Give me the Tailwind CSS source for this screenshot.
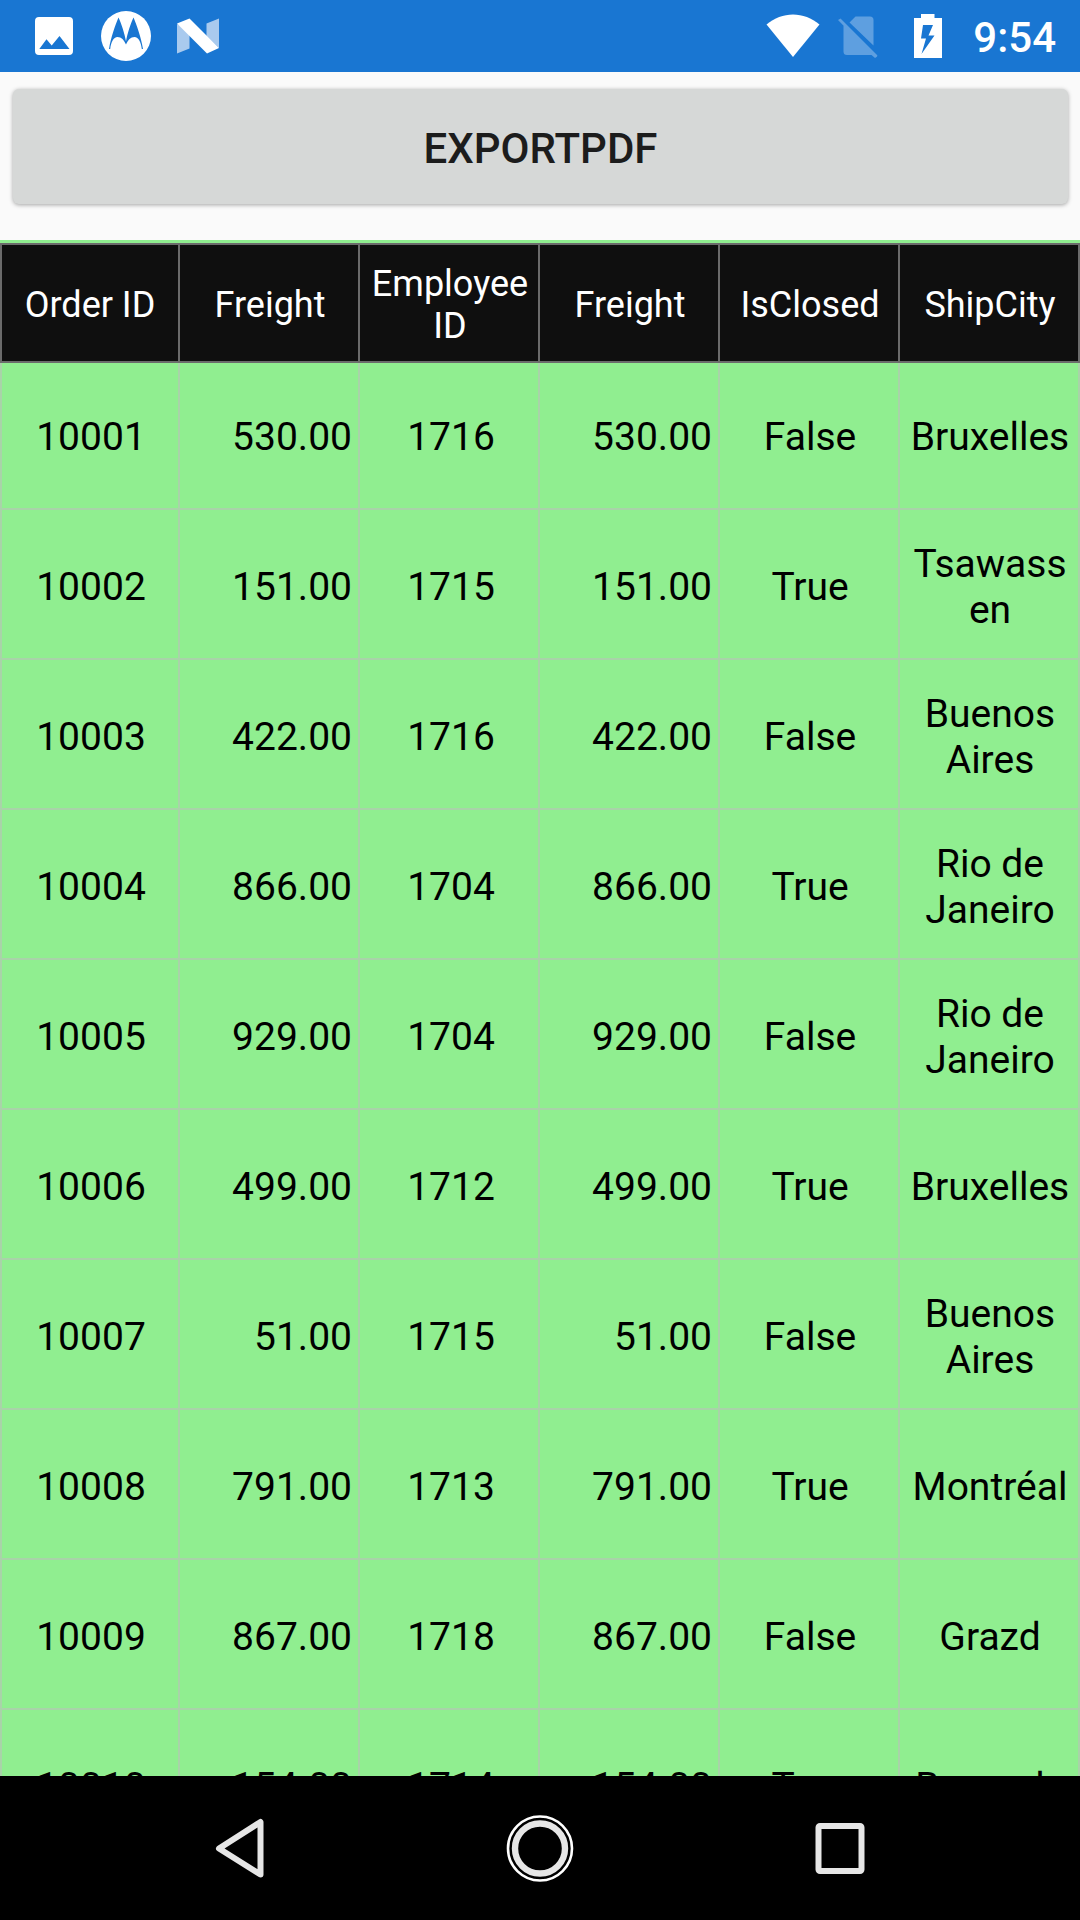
<!DOCTYPE html>
<html lang="en">
<head>
<meta charset="utf-8">
<title>Orders</title>
<script src="https://cdn.jsdelivr.net/npm/@tailwindcss/browser@4"></script>
</head>
<body class="w-[1080px] h-[1920px] overflow-hidden flex flex-col bg-[#fafafa] font-[Roboto,sans-serif]">
  <header class="h-[72px] shrink-0 bg-[#1976d2] flex items-center justify-between pl-[35px] pr-[24px]">
    <div class="flex items-center">
      <svg class="w-[38px] h-[38px]" viewBox="0 0 38 38"><path fill="#fff" fill-rule="evenodd" d="M4 0H34A4 4 0 0 1 38 4V34A4 4 0 0 1 34 38H4A4 4 0 0 1 0 34V4A4 4 0 0 1 4 0ZM4.300 32H34.500L24.500 19L16.700 28.500L11.500 22.300Z"/></svg>
      <svg class="w-[50px] h-[50px] ml-[28px]" viewBox="0 0 50 50"><circle cx="25" cy="25" r="25" fill="#fff"/><path fill="#1976d2" d="M17.500 6.500C20.500 13 23.500 22 25 30.500C26.500 22 29.500 13 32.500 6.500C36 15 40 26 42 38H40.800C40 31 37.500 26 33.500 26C29.500 26 27 29 25 33.500C23 29 20.500 26 16.500 26C12.500 26 10 31 9.200 38H8C10 26 14 15 17.500 6.500Z"/></svg>
      <svg class="w-[42px] h-[36px] ml-[26px]" viewBox="0 0 42 36"><path fill="#a9caee" d="M0 6L12.500 12V30.500L0 35.500ZM29.500 5.500L42 0.500V30L29.500 18Z"/><path fill="#fff" d="M0 5.500L12.500 0.500L42 30L30 35.500Z"/></svg>
    </div>
    <div class="flex items-center">
      <svg class="w-[54px] h-[44px]" viewBox="0 0 54 44"><path fill="#fff" d="M0.500 10.500C16-3 38-3 53.500 10.500L27 43Z"/></svg>
      <svg class="w-[40px] h-[44px] ml-[18px]" viewBox="0 0 40 44"><path fill="#5e9fe0" d="M11.500 8.500L17.500 2.500H32A3.500 3.500 0 0 1 35.500 6V31.500ZM5.500 9.500L34 38L39.300 42.500L37 44L33.500 41H9A3.500 3.500 0 0 1 5.500 37.500ZM0 6L2.500 4.500L39.500 41.500L37 44Z"/></svg>
      <svg class="w-[28px] h-[44px] ml-[36px]" viewBox="0 0 28 44"><path fill="#fff" fill-rule="evenodd" d="M7 0H20.500V4H28V44H0V4H7ZM9 11L7 24.500H12L7.500 40L20.500 21.500H14.500L19 11Z"/></svg>
      <span class="ml-[31px] pt-[4px] text-[42px] leading-[50px] font-medium text-white whitespace-nowrap">9:54</span>
    </div>
  </header>

  <div class="h-[168px] shrink-0 pl-[13px] pr-[12px] pt-[17px]">
    <button class="block w-full h-[115px] pt-[5px] rounded-[6px] bg-[#d6d8d7] shadow-[0_1px_4px_rgba(0,0,0,0.35)] text-[42px] leading-[50px] font-medium text-[#1c1c1c]">EXPORTPDF</button>
  </div>

  <main class="h-[1536px] shrink-0 overflow-hidden bg-[#90ee90] pt-[3px]">
    <div id="head" class="grid grid-cols-6 h-[120px] bg-[#0f0f0f] text-white text-[36px] leading-[42px]"></div>
    <div id="rows"></div>
  </main>

  <nav class="h-[144px] shrink-0 bg-black flex items-center justify-between px-[200px]">
    <svg class="w-[80px] h-[80px]" viewBox="0 0 80 80"><path d="M60.500 14V66.500L19 40.500Z" fill="none" stroke="#e6e6e6" stroke-width="6" stroke-linejoin="round"/></svg>
    <svg class="w-[80px] h-[80px]" viewBox="0 0 80 80" fill="none"><circle cx="40" cy="40.500" r="32" stroke="#fff" stroke-width="2.600"/><circle cx="40" cy="40.500" r="25" stroke="#e6e6e6" stroke-width="6.400"/></svg>
    <svg class="w-[80px] h-[80px]" viewBox="0 0 80 80"><rect x="18.500" y="18" width="43" height="45" rx="1.500" fill="none" stroke="#e6e6e6" stroke-width="6"/></svg>
  </nav>

<script>
  const columns = ["Order ID", "Freight", "Employee<br>ID", "Freight", "IsClosed", "ShipCity"];
  const orders = [
    [10001, "530.00", 1716, "False", "Bruxelles"],
    [10002, "151.00", 1715, "True", "Tsawass<br>en"],
    [10003, "422.00", 1716, "False", "Buenos<br>Aires"],
    [10004, "866.00", 1704, "True", "Rio de<br>Janeiro"],
    [10005, "929.00", 1704, "False", "Rio de<br>Janeiro"],
    [10006, "499.00", 1712, "True", "Bruxelles"],
    [10007, "51.00", 1715, "False", "Buenos<br>Aires"],
    [10008, "791.00", 1713, "True", "Montréal"],
    [10009, "867.00", 1718, "False", "Grazd"],
    [10010, "154.00", 1714, "True", "Brussels"],
  ];
  const cellPad = ["border-l-2 pl-[2px] justify-center", "justify-end pr-[6px]", "pl-[4px] justify-center", "justify-end pr-[6px]", "pl-[2px] justify-center", "pl-[2px] justify-center"];
  document.getElementById("head").innerHTML = columns.map((c, i) =>
    `<div class="flex items-center justify-center text-center pt-[4px] border-y-2 border-r-2 border-[#6b6b6b] ${i === 0 ? "border-l-2" : "pl-[2px]"}">${c}</div>`).join("");
  document.getElementById("rows").innerHTML = orders.map((o, r) => {
    const cells = [o[0], o[1], o[2], o[1], o[3], o[4]];
    return `<div class="grid grid-cols-6 text-black text-[39px] leading-[46px] ${r === 0 ? "h-[147px]" : "h-[150px]"}">` + cells.map((c, i) =>
      `<div class="flex items-center text-center border-b-2 border-r-2 border-x-[#a9d3a9] border-b-[#a9d3a9] ${r === 0 ? "pt-[3px]" : "pt-[6px]"} ${cellPad[i]}">${c}</div>`).join("") + `</div>`;
  }).join("");
</script>
</body>
</html>
